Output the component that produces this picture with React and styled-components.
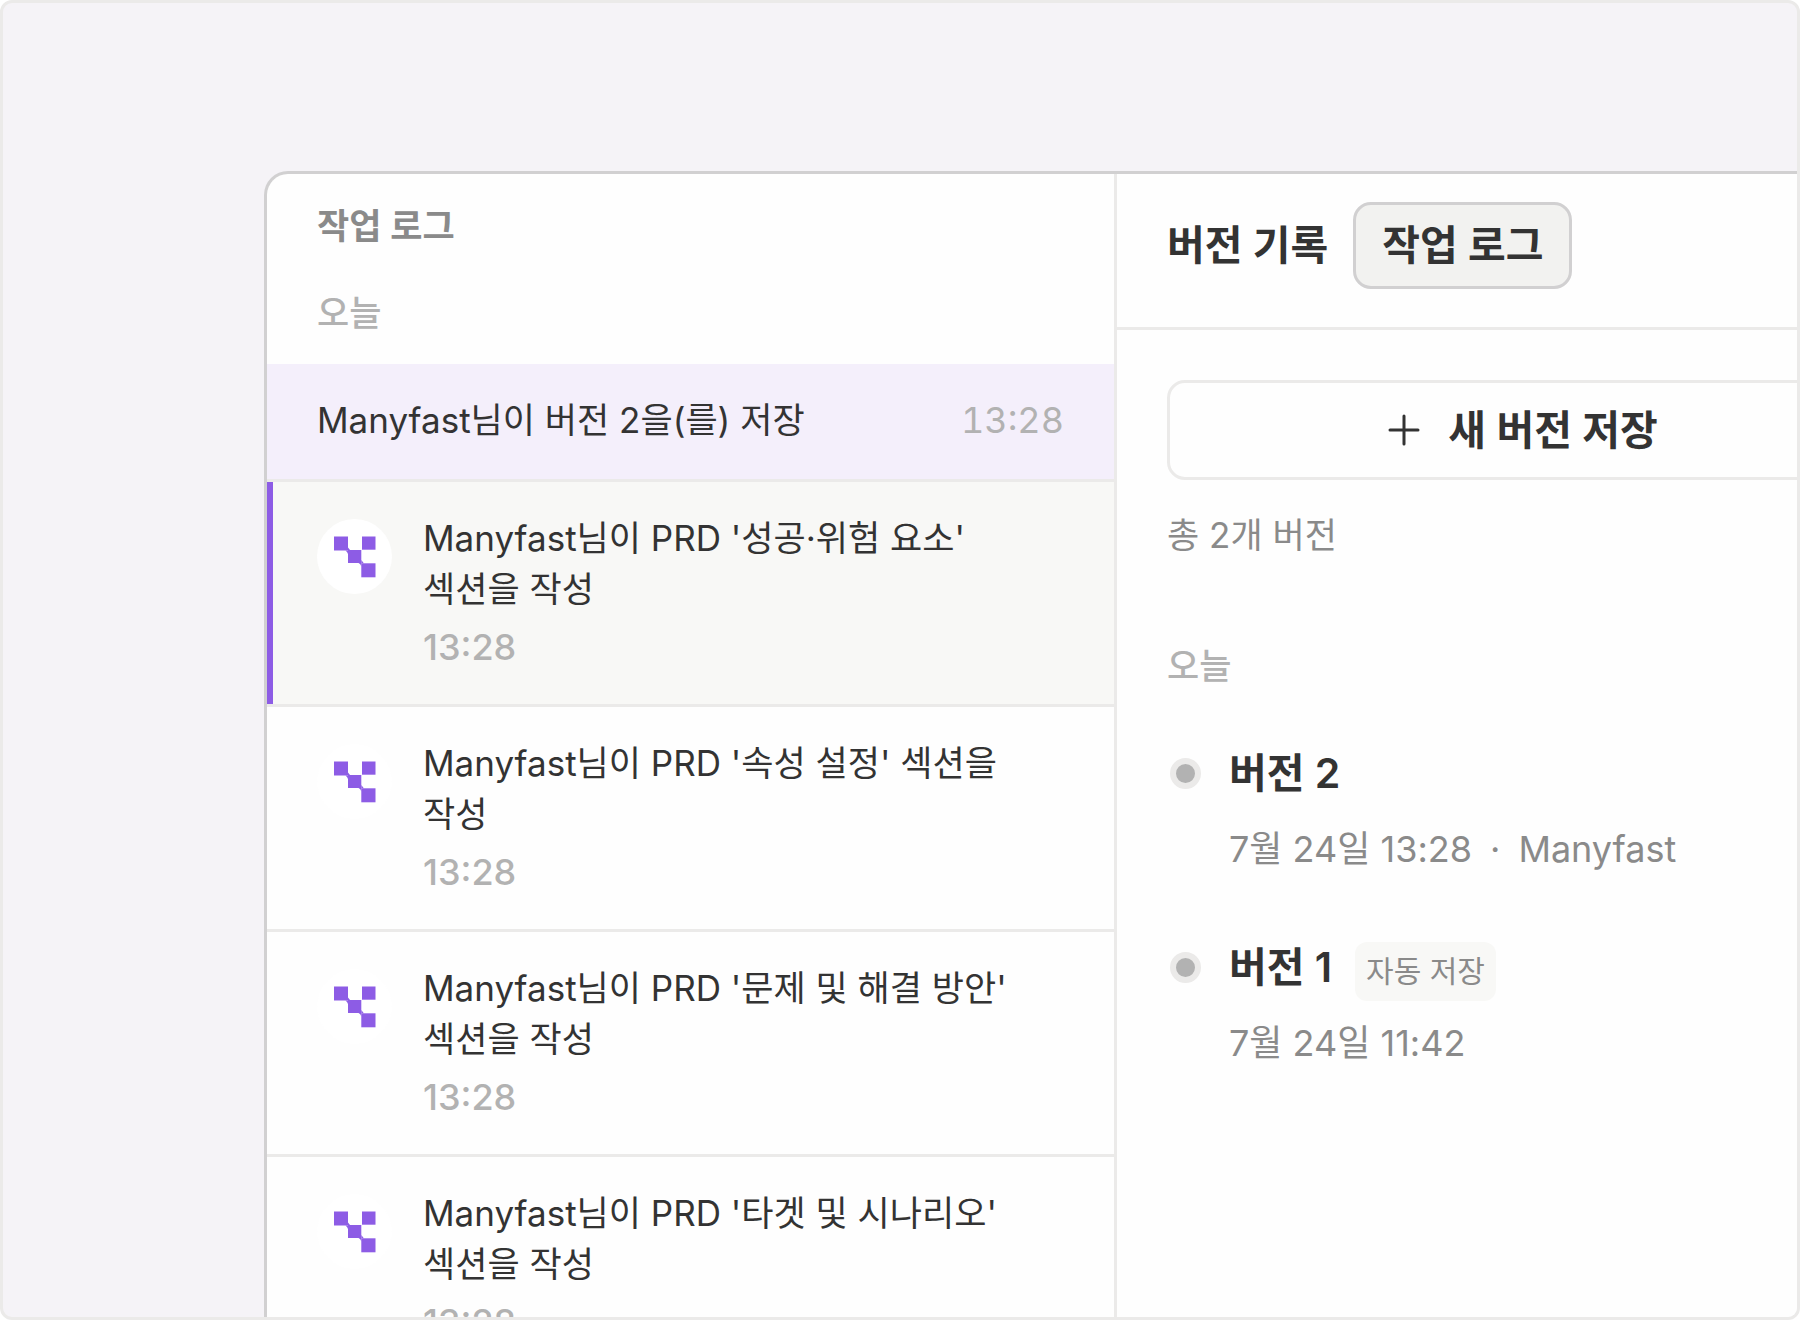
import React from "react";
import styled, { createGlobalStyle } from "styled-components";

const color = {
  canvas: "#f5f3f7",
  surface: "#fefefe",
  line: "#ebeae9",
  edge: "#d1d0d1",
  ink: "#333333",
  muted: "#8a8a8a",
  faint: "#b2b2b2",
  accent: "#8d5ce5",
  accentSoft: "#f4effb",
  hover: "#f8f8f6",
  pressed: "#f2f2f0",
};

const GlobalStyle = createGlobalStyle`
  *, *::before, *::after { box-sizing: border-box; }
  body {
    margin: 0;
    background: #ffffff;
    color: ${color.ink};
    font-family: Inter, "Noto Sans CJK KR", sans-serif;
    font-size: 35px;
    font-weight: 400;
    line-height: 51px;
    -webkit-font-smoothing: antialiased;
  }
  h1, h2, h3, p, ul { margin: 0; padding: 0; }
  ul { list-style: none; }
  button { font: inherit; color: inherit; cursor: pointer; }
`;

const Frame = styled.div`
  display: flex;
  height: 100vh;
  padding: 168px 0 0 261px;
  overflow: hidden;
  background: ${color.canvas};
  border: 3px solid ${color.line};
  border-radius: 12px;
`;

const Window = styled.div`
  flex: 1;
  display: grid;
  grid-template-columns: minmax(0, 850fr) minmax(0, 804fr);
  margin-right: -124px;
  overflow: hidden;
  background: ${color.surface};
  border: 3px solid ${color.edge};
  border-width: 3px 0 0 3px;
  border-radius: 24px 0 0 0;
`;

const LogColumn = styled.section`
  border-right: 3px solid ${color.line};
`;

const LogHeader = styled.header`
  display: grid;
  gap: 36px;
  height: 190px;
  padding: 27px 50px 0;
  align-content: start;
`;

const LogTitle = styled.h2`
  color: ${color.muted};
  font-size: 35px;
  font-weight: 600;
`;

const DayLabel = styled.h3`
  color: ${color.faint};
  font-size: 35px;
  font-weight: 500;
`;

const SavedRow = styled.li`
  display: flex;
  align-items: center;
  justify-content: space-between;
  padding: 31px 50px 33px;
  background: ${color.accentSoft};
  border-bottom: 3px solid ${color.line};
`;

const LogRow = styled.li`
  display: flex;
  gap: 31px;
  padding: 31px 50px;
  background: ${(p) => (p.$active ? color.hover : "transparent")};
  box-shadow: ${(p) => (p.$active ? `inset 6px 0 0 ${color.accent}` : "none")};
  border-bottom: 3px solid ${color.line};
`;

const Avatar = styled.span`
  flex: none;
  width: 75px;
  height: 75px;
  margin-top: 6px;
  border-radius: 50%;
  background: #ffffff;
  svg { display: block; }
`;

const LogBody = styled.div`
  display: grid;
  gap: 7px;
  word-break: keep-all;
`;

const LogText = styled.p`
  color: ${color.ink};
`;

const Time = styled.time`
  color: ${color.faint};
  font-size: 36px;
  font-weight: ${(p) => (p.$tabular ? 400 : 500)};
  font-variant-numeric: ${(p) => (p.$tabular ? "tabular-nums" : "normal")};
`;

const VersionColumn = styled.section`
  min-width: 0;
`;

const Tabs = styled.nav`
  display: flex;
  align-items: center;
  gap: 25px;
  height: 156px;
  padding: 0 50px 10px;
  border-bottom: 3px solid ${color.line};
`;

const Tab = styled.button`
  height: 87px;
  padding: ${(p) => (p.$active ? "0 26px" : "0")};
  font-size: 41px;
  font-weight: 600;
  background: ${(p) => (p.$active ? color.pressed : "transparent")};
  border: ${(p) => (p.$active ? `3px solid ${color.edge}` : "0")};
  border-radius: 18px;
`;

const VersionBody = styled.div`
  padding: 50px;
`;

const SaveButton = styled.button`
  display: flex;
  align-items: center;
  justify-content: center;
  gap: 20px;
  width: 100%;
  height: 100px;
  font-size: 41px;
  font-weight: 600;
  background: transparent;
  border: 3px solid ${color.line};
  border-radius: 18px;
`;

const Count = styled.p`
  margin: 30px 0 80px;
  color: ${color.muted};
`;

const VersionList = styled.ul`
  display: grid;
  gap: 67px;
  margin-top: 56px;
`;

const Version = styled.li`
  display: grid;
  grid-template-columns: 31px 1fr;
  column-gap: 28px;
  row-gap: 17px;
  align-items: start;
  padding-left: 3px;
`;

const Dot = styled.span`
  width: 31px;
  height: 31px;
  margin-top: 10px;
  background: ${color.faint};
  border: 6px solid ${color.line};
  border-radius: 50%;
`;

const VersionHead = styled.div`
  display: flex;
  align-items: baseline;
  gap: 23px;
  height: 59px;
`;

const VersionName = styled.h3`
  font-size: 41px;
  font-weight: 600;
`;

const Badge = styled.span`
  padding: 4px 11px;
  color: ${color.muted};
  font-size: 30px;
  background: ${color.hover};
  border-radius: 12px;
`;

const Meta = styled.p`
  grid-column: 2;
  display: flex;
  gap: 18px;
  color: ${color.muted};
  font-size: 36px;
`;

const ManyfastMark = () => (
  <svg width="75" height="75" viewBox="0 0 75 75" fill={color.accent} aria-hidden="true">
    <rect x="17" y="17.5" width="14" height="14" />
    <rect x="45" y="17.5" width="13.5" height="13.2" />
    <rect x="31" y="31" width="13.3" height="13" />
    <rect x="44.3" y="44.3" width="14.2" height="14" />
    <path d="M28.5 31.5h2.5v3.5l-1-2zM31 28.5l2 2.5h-2zM41.5 44h2.8v3.5l-1-2.3zM44.3 41l2.5 3.3h-2.5z" />
  </svg>
);

const PlusIcon = () => (
  <svg width="48" height="48" viewBox="0 0 48 48" stroke={color.ink} strokeWidth="3" strokeLinecap="round" aria-hidden="true">
    <path d="M10 24h28M24 10v28" />
  </svg>
);

const entries = [
  { section: "성공·위험 요소", time: "13:28", active: true },
  { section: "속성 설정", time: "13:28" },
  { section: "문제 및 해결 방안", time: "13:28" },
  { section: "타겟 및 시나리오", time: "13:28" },
];

const versions = [
  { name: "버전 2", date: "7월 24일 13:28", author: "Manyfast" },
  { name: "버전 1", date: "7월 24일 11:42", badge: "자동 저장" },
];

export default function App() {
  return (
    <>
      <GlobalStyle />
      <Frame>
        <Window>
          <LogColumn>
            <LogHeader>
              <LogTitle>작업 로그</LogTitle>
              <DayLabel>오늘</DayLabel>
            </LogHeader>
            <ul>
              <SavedRow>
                <LogText>Manyfast님이 버전 2을(를) 저장</LogText>
                <Time $tabular>13:28</Time>
              </SavedRow>
              {entries.map((entry) => (
                <LogRow key={entry.section} $active={entry.active}>
                  <Avatar>
                    <ManyfastMark />
                  </Avatar>
                  <LogBody>
                    <LogText>{`Manyfast님이 PRD '${entry.section}' 섹션을 작성`}</LogText>
                    <Time>{entry.time}</Time>
                  </LogBody>
                </LogRow>
              ))}
            </ul>
          </LogColumn>
          <VersionColumn>
            <Tabs>
              <Tab type="button">버전 기록</Tab>
              <Tab type="button" $active>작업 로그</Tab>
            </Tabs>
            <VersionBody>
              <SaveButton type="button">
                <PlusIcon />
                새 버전 저장
              </SaveButton>
              <Count>총 2개 버전</Count>
              <DayLabel>오늘</DayLabel>
              <VersionList>
                {versions.map((version) => (
                  <Version key={version.name}>
                    <Dot />
                    <VersionHead>
                      <VersionName>{version.name}</VersionName>
                      {version.badge && <Badge>{version.badge}</Badge>}
                    </VersionHead>
                    <Meta>
                      <span>{version.date}</span>
                      {version.author && (
                        <>
                          <span>·</span>
                          <span>{version.author}</span>
                        </>
                      )}
                    </Meta>
                  </Version>
                ))}
              </VersionList>
            </VersionBody>
          </VersionColumn>
        </Window>
      </Frame>
    </>
  );
}
